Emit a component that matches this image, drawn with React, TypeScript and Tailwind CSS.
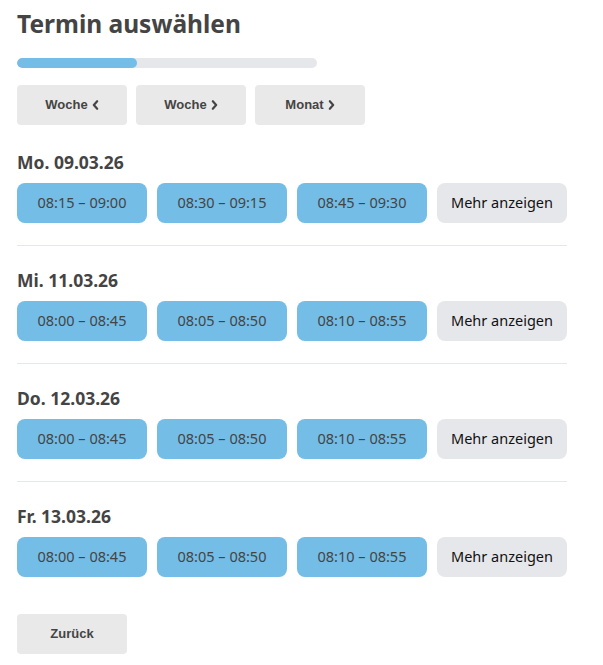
import * as React from "react"

const days = [
  { label: "Mo. 09.03.26", slots: ["08:15 – 09:00", "08:30 – 09:15", "08:45 – 09:30"] },
  { label: "Mi. 11.03.26", slots: ["08:00 – 08:45", "08:05 – 08:50", "08:10 – 08:55"] },
  { label: "Do. 12.03.26", slots: ["08:00 – 08:45", "08:05 – 08:50", "08:10 – 08:55"] },
  { label: "Fr. 13.03.26", slots: ["08:00 – 08:45", "08:05 – 08:50", "08:10 – 08:55"] },
]

const uiFont = { fontFamily: '"Noto Sans", "Open Sans", sans-serif' }
const navFont = { fontFamily: '"Liberation Sans", Arial, sans-serif' }

function Chevron({ dir }: { dir: "left" | "right" }) {
  return (
    <svg viewBox="0 0 8 12" className="h-[10px] w-[7px]" fill="none" stroke="currentColor" strokeWidth="2.6" strokeLinecap="round" strokeLinejoin="round">
      {dir === "left" ? <polyline points="6,1.5 2,6 6,10.5" /> : <polyline points="2,1.5 6,6 2,10.5" />}
    </svg>
  )
}

function NavButton({ children }: { children: React.ReactNode }) {
  return (
    <button
      type="button"
      style={navFont}
      className="flex h-10 w-[110px] items-center justify-center gap-[4px] rounded bg-[#e9e9e9] text-[13px] font-bold text-[#444]"
    >
      {children}
    </button>
  )
}

export default function App() {
  return (
    <div className="bg-white px-[17px] pt-[7px] pb-3 text-[#444]" style={uiFont}>
      <h1 className="text-[24.5px] font-bold leading-[34px] text-[#444]">Termin auswählen</h1>

      <div className="mt-[17px] h-[10px] w-[300px] overflow-hidden rounded-full bg-[#e5e7eb]">
        <div className="h-full w-[40%] rounded-full bg-[#74bde6]" />
      </div>

      <div className="mt-[17px] flex gap-[9px]">
        <NavButton>
          Woche <Chevron dir="left" />
        </NavButton>
        <NavButton>
          Woche <Chevron dir="right" />
        </NavButton>
        <NavButton>
          Monat <Chevron dir="right" />
        </NavButton>
      </div>

      <div className="mt-[25px] w-[550px]">
        {days.map((day, i) => (
          <div key={day.label}>
            {i > 0 && <div className="mt-[22px] mb-[22px] h-px bg-[#e5e7eb]" />}
            <h2 className="text-[17.5px] font-bold leading-6 text-[#444]">{day.label}</h2>
            <div className="mt-[9px] flex gap-[10px]">
              {day.slots.map((s, j) => (
                <button
                  key={j}
                  type="button"
                  className="flex h-10 w-[130px] items-center justify-center rounded-lg bg-[#74bde6] text-[14.5px] text-[#444]"
                >
                  {s}
                </button>
              ))}
              <button
                type="button"
                className="flex h-10 w-[130px] items-center justify-center rounded-lg bg-[#e6e7eb] text-[14.5px] text-[#111]"
              >
                Mehr anzeigen
              </button>
            </div>
          </div>
        ))}
      </div>

      <button
        type="button"
        style={navFont}
        className="mt-[37px] flex h-10 w-[110px] items-center justify-center rounded bg-[#e9e9e9] text-[13px] font-bold text-[#444]"
      >
        Zurück
      </button>
    </div>
  )
}
